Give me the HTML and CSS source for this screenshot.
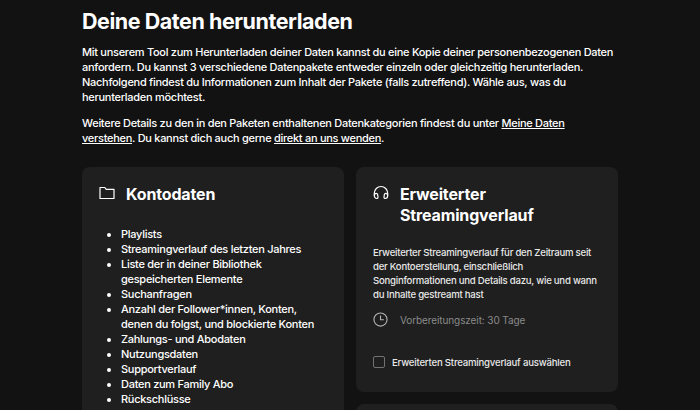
FILE: index.html
```html
<!DOCTYPE html>
<html>
<head>
    <meta charset="UTF-8">
    <title>Deine Daten herunterladen</title>
    <link rel="stylesheet" href="styles.css">
</head>
<body>
    <div class="page">
        <h1>Deine Daten herunterladen</h1>
        <p class="intro">Mit unserem Tool zum Herunterladen deiner Daten kannst du eine Kopie deiner personenbezogenen Daten anfordern. Du kannst 3 verschiedene Datenpakete entweder einzeln oder gleichzeitig herunterladen. Nachfolgend findest du Informationen zum Inhalt der Pakete (falls zutreffend). Wähle aus, was du herunterladen möchtest.</p>
        <p class="intro">Weitere Details zu den in den Paketen enthaltenen Datenkategorien findest du unter <a href="#">Meine Daten verstehen</a>. Du kannst dich auch gerne <a href="#">direkt an uns wenden</a>.</p>
        <div class="cards">
            <div class="card">
                <div class="card-head">
                    <svg class="head-icon" viewBox="0 0 16 16" fill="none" stroke="currentColor" stroke-width="1.2"><path d="M1 2.500h4.800l1.400 1.900h7.800v9.100H1z" stroke-linejoin="round"/></svg>
                    <h2>Kontodaten</h2>
                </div>
                <ul class="data-list">
                    <li>Playlists</li>
                    <li>Streamingverlauf des letzten Jahres</li>
                    <li>Liste der in deiner Bibliothek gespeicherten Elemente</li>
                    <li>Suchanfragen</li>
                    <li>Anzahl der Follower*innen, Konten, denen du folgst, und blockierte Konten</li>
                    <li>Zahlungs- und Abodaten</li>
                    <li>Nutzungsdaten</li>
                    <li>Supportverlauf</li>
                    <li>Daten zum Family Abo</li>
                    <li>Rückschlüsse</li>
                </ul>
            </div>
            <div class="side">
                <div class="card">
                    <div class="card-head">
                        <svg class="head-icon" viewBox="0 0 16 16" fill="none" stroke="currentColor" stroke-width="1.2"><path d="M1.300 10.500V8.200a6.700 6.700 0 0 1 13.400 0v2.300"/><path d="M1.300 10.600c0-1.400 1-2.300 2-2.300.7 0 1.200.5 1.300 1.100l.4 2.600c.1.800-.4 1.500-1.200 1.500-1.400 0-2.500-1.200-2.500-2.900z"/><path d="M14.700 10.600c0-1.400-1-2.300-2-2.300-.7 0-1.200.5-1.300 1.100l-.4 2.600c-.1.800.4 1.500 1.200 1.500 1.400 0 2.500-1.200 2.500-2.900z"/></svg>
                        <h2>Erweiterter Streamingverlauf</h2>
                    </div>
                    <p class="card-text">Erweiterter Streamingverlauf für den Zeitraum seit der Kontoerstellung, einschließlich Songinformationen und Details dazu, wie und wann du Inhalte gestreamt hast</p>
                    <div class="prep">
                        <svg class="prep-icon" viewBox="0 0 16 16" fill="none" stroke="currentColor" stroke-width="1.2"><circle cx="8" cy="8" r="7"/><path d="M8 3.600V8.300h3.600"/></svg>
                        <span>Vorbereitungszeit: 30 Tage</span>
                    </div>
                    <label class="pick"><span class="box"></span>Erweiterten Streamingverlauf auswählen</label>
                </div>
                <div class="card"></div>
            </div>
        </div>
    </div>
</body>
</html>
```

FILE: styles.css
```css
html, body {
    height: 410px;
    overflow: hidden;
}

body {
    background: #121212;
    font-family: Inter, 'Noto Sans', sans-serif;
    margin: 0;
    color: #fff;
}

.page {
    width: 536px;
    margin: 0 auto;
    padding-top: 8px;
}

h1 {
    font-size: 21.5px;
    line-height: 26px;
    font-weight: 700;
    letter-spacing: -0.45px;
    margin: 0 0 11px;
}

.intro {
    font-size: 11px;
    line-height: 15px;
    font-weight: 500;
    letter-spacing: -0.28px;
    margin: 0 0 11px;
}

.intro a {
    color: #fff;
}

.cards {
    display: grid;
    grid-template-columns: 262px 262px;
    gap: 12px;
    margin-top: 21px;
    align-items: start;
}

.side {
    display: flex;
    flex-direction: column;
    gap: 12px;
}

.card {
    background: #1f1f1f;
    border-radius: 8px;
    padding: 17px 17px 16px;
    min-height: 100px;
}

.card-head {
    display: flex;
    gap: 11px;
    align-items: flex-start;
}

.head-icon {
    width: 16px;
    height: 16px;
    flex: none;
    margin-top: 1px;
}

h2 {
    font-size: 16px;
    line-height: 21px;
    font-weight: 700;
    letter-spacing: -0.15px;
    margin: 0;
}

.data-list {
    margin: 22px 0 0;
    padding-left: 22px;
    font-size: 11px;
    line-height: 15px;
    font-weight: 500;
    letter-spacing: -0.28px;
}

.card-text {
    font-size: 9.6px;
    line-height: 14px;
    font-weight: 500;
    letter-spacing: -0.24px;
    color: #e8e8e8;
    margin: 20px 0 0;
}

.prep {
    display: flex;
    align-items: center;
    gap: 12px;
    margin-top: 10px;
    font-size: 10px;
    letter-spacing: -0.1px;
    color: #8a8a8a;
}

.prep-icon {
    width: 15px;
    height: 15px;
    color: #b3b3b3;
}

.pick {
    display: flex;
    align-items: center;
    gap: 7px;
    margin: 29px 0 8px;
    font-size: 9.6px;
    font-weight: 500;
    letter-spacing: -0.2px;
    color: #e8e8e8;
}

.box {
    width: 10px;
    height: 10px;
    border: 1px solid #727272;
    border-radius: 2px;
}
```
